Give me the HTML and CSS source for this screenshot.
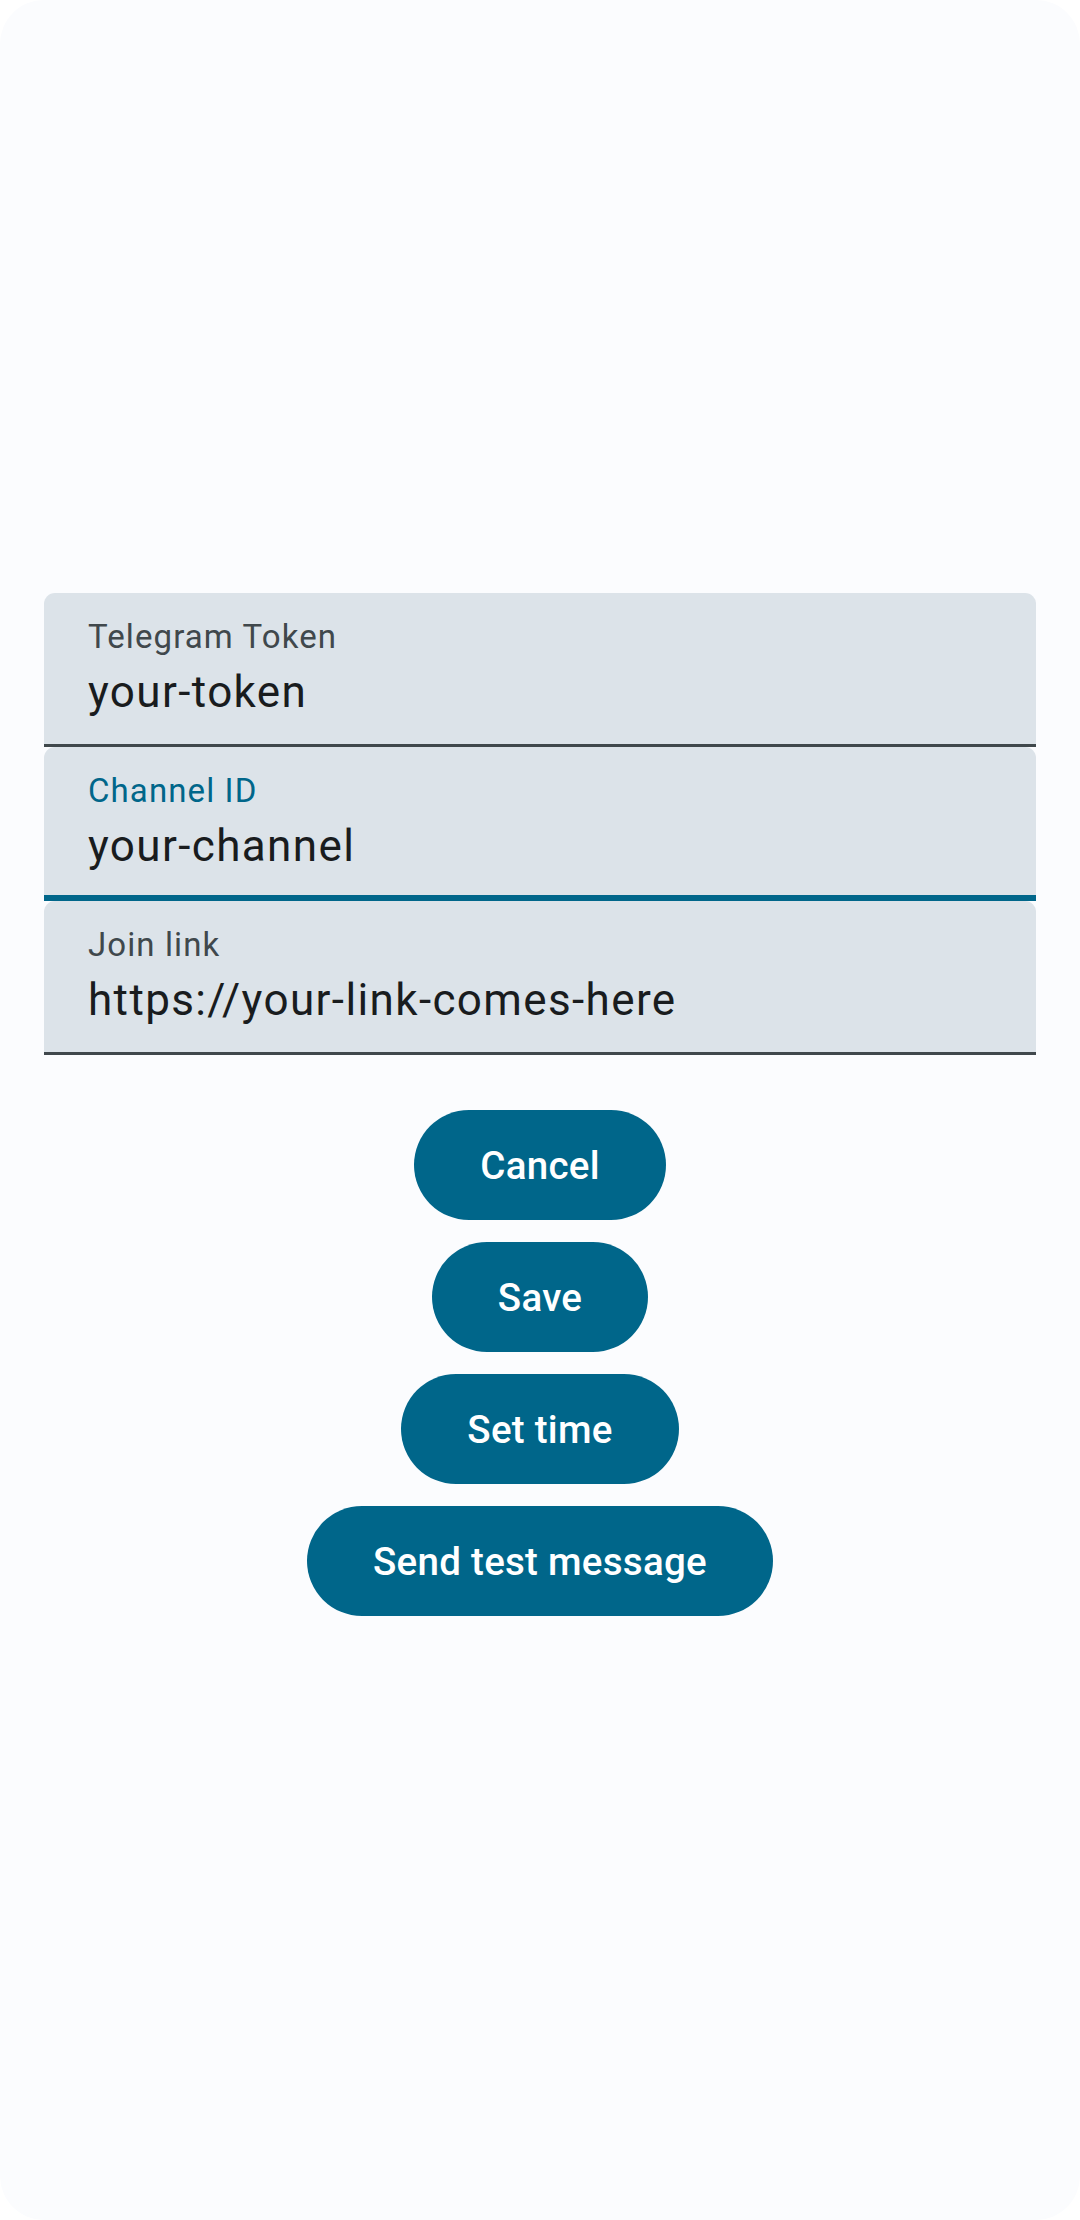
FILE: index.html
```html
<!DOCTYPE html>
<html lang="en">
<head>
<meta charset="utf-8">
<title>Telegram settings</title>
<link rel="stylesheet" href="styles.css">
</head>
<body>
<div class="screen">
  <div class="form">
    <div class="fields">
      <div class="field">
        <span class="label">Telegram Token</span>
        <span class="value">your-token</span>
      </div>
      <div class="field focused">
        <span class="label">Channel ID</span>
        <span class="value">your-channel</span>
      </div>
      <div class="field">
        <span class="label">Join link</span>
        <span class="value">https://your-link-comes-here</span>
      </div>
    </div>
    <div class="actions">
      <button class="btn">Cancel</button>
      <button class="btn">Save</button>
      <button class="btn">Set time</button>
      <button class="btn">Send test message</button>
    </div>
  </div>
</div>
</body>
</html>
```

FILE: styles.css
```css
html, body {
  margin: 0;
  padding: 0;
  background: #ffffff;
}

.screen {
  width: 1080px;
  height: 2220px;
  box-sizing: border-box;
  background: #fbfcfe;
  border-radius: 44px;
  display: flex;
  flex-direction: column;
  justify-content: center;
  padding: 0 44px;
  font-family: Roboto, "Noto Sans", sans-serif;
}

.form {
  display: flex;
  flex-direction: column;
}

.fields {
  display: flex;
  flex-direction: column;
}

.field {
  height: 154px;
  box-sizing: border-box;
  background: #dce3e9;
  border-radius: 11px 11px 0 0;
  padding: 22px 44px 0;
  display: flex;
  flex-direction: column;
  box-shadow: inset 0 -3px 0 #40484c;
}

.field.focused {
  box-shadow: inset 0 -6px 0 #00668a;
}

.label {
  font-size: 33px;
  line-height: 44px;
  letter-spacing: 1.1px;
  color: #40484c;
}

.field.focused .label {
  color: #00668a;
}

.value {
  font-size: 44px;
  line-height: 66px;
  letter-spacing: 1.375px;
  color: #191c1e;
}

.actions {
  display: flex;
  flex-direction: column;
  align-items: center;
  gap: 22px;
  padding: 55px 0 11px;
}

.btn {
  height: 110px;
  padding: 0 66px;
  border: none;
  border-radius: 55px;
  background: #00668a;
  color: #ffffff;
  font-family: Roboto, "Noto Sans", sans-serif;
  font-size: 38.5px;
  font-weight: 500;
  letter-spacing: 0.275px;
}
```
